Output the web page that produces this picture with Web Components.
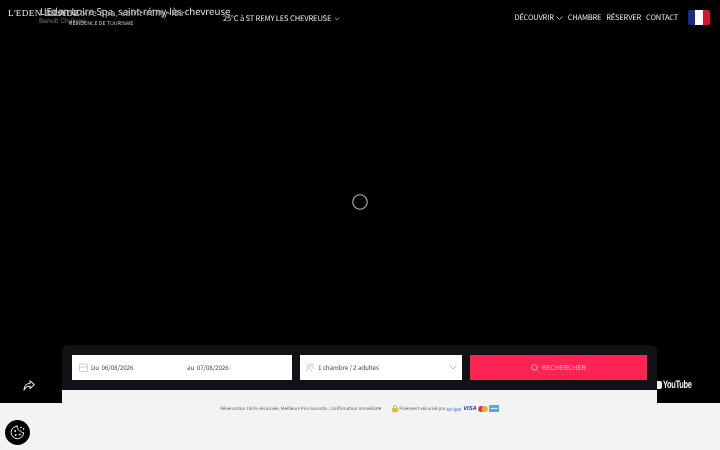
<!doctype html>
<html lang="fr">
<head>
<meta charset="utf-8">
<title>L'Eden Loire Spa</title>
<style>
  html, body { margin: 0; height: 450px; overflow: hidden; background: #f3f3f3; }
  body { font-family: "Noto Sans CJK JP", "Noto Sans", sans-serif; text-rendering: geometricPrecision; }
</style>
</head>
<body>
<eden-page>
  <eden-header slot="header"></eden-header>
  <eden-spinner slot="hero"></eden-spinner>
  <eden-share slot="left"></eden-share>
  <eden-booking slot="booking"></eden-booking>
  <eden-youtube slot="right"></eden-youtube>
</eden-page>
<eden-cookie></eden-cookie>

<script>
// Page frame: black hero on top, booking row straddling the hero's lower edge
class EdenPage extends HTMLElement {
  constructor() {
    super();
    this.attachShadow({ mode: 'open' }).innerHTML = `
      <style>
        :host { display: block; width: 720px; }
        .hero { background: #000; height: 345px; display: flex; flex-direction: column; }
        .mid { flex: 1; display: flex; align-items: center; justify-content: center; padding-top: 22px; }
        .row { display: grid; grid-template-columns: 62px 595px 63px; align-items: start; }
        .side { background: #000; height: 58px; }
      </style>
      <div class="hero">
        <slot name="header"></slot>
        <div class="mid"><slot name="hero"></slot></div>
      </div>
      <div class="row">
        <div class="side"><slot name="left"></slot></div>
        <slot name="booking"></slot>
        <div class="side"><slot name="right"></slot></div>
      </div>
    `;
  }
}

// Top bar. The logo texts overlap in the reference, so they sit on a free layer.
class EdenHeader extends HTMLElement {
  constructor() {
    super();
    this.attachShadow({ mode: 'open' }).innerHTML = `
      <style>
        :host { display: flex; align-items: flex-start; height: 36px; color: #e6e6e6; }
        .logo { position: relative; width: 223px; height: 36px; flex: none; filter: blur(.3px); }
        .logo span { position: absolute; white-space: nowrap; }
        .brand { left: 8px; top: 6px; font: 9.2px/14px "Liberation Serif", serif; letter-spacing: .3px; color: #e8e8e8; }
        .title { left: 40px; top: 5px; font: 9.6px/14px "Noto Sans", sans-serif; color: #e0e0e0; }
        .title2 { left: 44px; top: 6px; font: 8.6px/14px "Noto Sans", sans-serif; color: #aaa; letter-spacing: .4px; }
        .author { left: 39px; top: 15px; font: 6.5px/12px Inter, sans-serif; color: #777; }
        .tag { left: 69px; top: 18px; font: 5.1px/12px "Noto Sans CJK JP", sans-serif; letter-spacing: .15px; color: #ccc; }
        .weather { margin-top: 12px; font-size: 7.6px; letter-spacing: -.18px; line-height: 14px; display: flex; align-items: center; gap: 3px; white-space: nowrap; filter: blur(.25px); }
        nav { margin-left: auto; margin-top: 11px; display: flex; align-items: center; gap: 5px; font-size: 7.5px; letter-spacing: -.2px; line-height: 14px; white-space: nowrap; filter: blur(.25px); }
        nav span { display: inline-flex; align-items: center; gap: 2px; }
        svg.chev { width: 7px; height: 4px; fill: none; stroke: #ddd; stroke-width: .8; }
        .weather svg.chev { width: 6px; }
        .flag { margin: 10px 10px 0 10px; width: 22px; height: 15px; border-radius: 2px; filter: blur(.3px);
          background: linear-gradient(90deg, #1a2a8c 0 33%, #fff 33% 66%, #d8142c 66%); flex: none; }
      </style>
      <div class="logo">
        <span class="brand">L'EDEN ILLADE</span>
        <span class="title">L'Eden Loire Spa, saint-rémy-lès-chevreuse</span>
        <span class="title2">L'Eden Loire Spa, saint-rémy-lès</span>
        <span class="author">Benoit Chaigne</span>
        <span class="tag">RÉSIDENCE DE TOURISME</span>
      </div>
      <div class="weather">25°C à ST REMY LES CHEVREUSE
        <svg class="chev" viewBox="0 0 7 4"><path d="M1 .5 3.5 3 6 .5"/></svg></div>
      <nav>
        <span>DÉCOUVRIR <svg class="chev" viewBox="0 0 7 4"><path d="M.5.5 3.5 3.5 6.5.5"/></svg></span>
        <span>CHAMBRE</span><span>RÉSERVER</span><span>CONTACT</span>
      </nav>
      <div class="flag"></div>
    `;
  }
}

class EdenSpinner extends HTMLElement {
  constructor() {
    super();
    this.attachShadow({ mode: 'open' }).innerHTML = `
      <style>:host { display: block; width: 16px; height: 16px; } svg { display: block; }</style>
      <svg width="16" height="16" viewBox="0 0 16 16"><circle cx="8" cy="8" r="7.2" fill="none" stroke="#b5b5b5" stroke-width="1.1"/></svg>
    `;
  }
}

class EdenShare extends HTMLElement {
  constructor() {
    super();
    this.attachShadow({ mode: 'open' }).innerHTML = `
      <style>:host { display: flex; justify-content: flex-end; padding: 35px 27px 0 0; } svg { display: block; }</style>
      <svg width="12" height="11" viewBox="0 0 12 11" fill="none" stroke="#e8e8e8" stroke-width="1.1" stroke-linejoin="round">
        <path d="M7 .8 11.3 4.7 7 8.6V6.3C4.4 6.2 2.6 7.4 1 10 1.2 6.3 3.4 3.6 7 3.2Z"/>
      </svg>
    `;
  }
}

class EdenYoutube extends HTMLElement {
  constructor() {
    super();
    this.attachShadow({ mode: 'open' }).innerHTML = `
      <style>
        :host { display: flex; align-items: center; padding-top: 34px; color: #eee; gap: 1px; }
        i { display: block; width: 5px; height: 8px; background: #eee; border-radius: 0 2px 2px 0; }
        span { font: bold 11px/12px "Liberation Sans", sans-serif; letter-spacing: -.5px; transform: scaleX(.68); transform-origin: left; white-space: nowrap; }
      </style>
      <i></i><span>YouTube</span>
    `;
  }
}

// One white field of the search bar
class EdenField extends HTMLElement {
  constructor() {
    super();
    this.attachShadow({ mode: 'open' }).innerHTML = `
      <style>
        :host { display: flex; align-items: center; background: #fff; height: 25px; padding: 0 5px 0 7px; box-sizing: border-box; color: #474a50; font-size: 6.3px; letter-spacing: -.11px; white-space: nowrap; }
      </style>
      <slot></slot>
    `;
  }
}

class EdenBooking extends HTMLElement {
  constructor() {
    super();
    this.attachShadow({ mode: 'open' }).innerHTML = `
      <style>
        :host { display: block; }
        .back { background: #000; }
        .bar { background: #111116; border-radius: 6px 6px 0 0; height: 45px; box-sizing: border-box; padding: 10px;
          display: grid; grid-template-columns: 220px 162px 1fr; gap: 8px; }
        .date { flex: 0 0 108px; display: flex; align-items: center; gap: 3px; filter: blur(.2px); }
        .guest { flex: 1; display: flex; align-items: center; gap: 3px; margin-left: -2px; filter: blur(.2px); }
        button { border: 0; padding: 0; background: #ff2353; color: #f7b4c4; font: 7px/25px "Noto Sans CJK JP", sans-serif; letter-spacing: -.1px; height: 25px;
          display: flex; align-items: center; justify-content: center; gap: 3px; text-rendering: geometricPrecision; }
        button span { display: block; padding-top: 1px; line-height: 12px; }
        .trust { display: flex; align-items: center; justify-content: center; gap: 11px; height: 36px; box-sizing: border-box; padding-top: 1px; font-size: 4.5px; color: #5c5f64; white-space: nowrap; filter: blur(.2px); }
        .pay { display: flex; align-items: center; gap: 1px; }
        .stripe { color: #6a86e8; font: 600 5.2px/8px "Noto Sans", sans-serif; }
        .visa { color: #26408f; font: italic bold 5.8px/8px "Liberation Sans", sans-serif; margin-left: 1px; }
        svg { display: block; flex: none; }
      </style>
      <div class="back"><div class="bar">
        <eden-field>
          <span class="date">
            <svg width="9" height="9" viewBox="0 0 9 9" fill="none" stroke="#b8b8b8" stroke-width=".7"><rect x=".5" y="1" width="8" height="7.5" rx="1"/><path d="M.5 4h8"/></svg>
            Du&nbsp; 06/08/2026
          </span>
          <span class="date">au&nbsp; 07/08/2026</span>
        </eden-field>
        <eden-field>
          <span class="guest">
            <svg width="10" height="9" viewBox="0 0 9 9" fill="none" stroke="#bbb" stroke-width=".7"><circle cx="3.4" cy="3" r="1.5"/><path d="M.7 8.5C1 6 2 5.2 3.4 5.2S5.8 6 6 8.5"/><circle cx="6.6" cy="2" r="1.2"/><path d="M6.6 4.2c1.2 0 1.8.8 2 2.4"/></svg>
            1 chambre / 2 adultes
          </span>
          <svg width="8" height="5" viewBox="0 0 8 5" fill="none" stroke="#aaa" stroke-width=".8"><path d="M.5.5 4 4 7.5.5"/></svg>
        </eden-field>
        <button>
          <svg width="8" height="8" viewBox="0 0 8 8" fill="none" stroke="#f7b4c4" stroke-width=".9"><circle cx="3.4" cy="3.4" r="2.7"/><path d="M5.4 5.4 7.6 7.6"/></svg>
          <span>RECHERCHER</span>
        </button>
      </div></div>
      <div class="trust">
        <span>Réservation 100% sécurisée, Meilleurs Prix Garantis, Confirmation Immédiate</span>
        <span class="pay">
          <svg width="6" height="7" viewBox="0 0 6 7"><path d="M1.4 3V2a1.6 1.6 0 0 1 3.2 0v1" fill="none" stroke="#b89a3a" stroke-width=".7"/><rect y="3" width="6" height="4" rx=".5" fill="#e0b93e"/></svg>
          Paiement sécurisé par <span class="stripe">stripe</span>
          <span class="visa">VISA</span>
          <svg width="10" height="6" viewBox="0 0 10 6"><circle cx="3.2" cy="3" r="3" fill="#e0343a"/><circle cx="6.8" cy="3" r="3" fill="#f2a93a"/></svg>
          <svg width="10" height="7" viewBox="0 0 10 7"><rect width="10" height="7" rx=".6" fill="#5aa4dc"/><path d="M1.5 3.5h7" stroke="#d8ecf8" stroke-width="1.2"/></svg>
        </span>
      </div>
    `;
  }
}

// Round cookie button, floats over the page corner
class EdenCookie extends HTMLElement {
  constructor() {
    super();
    this.attachShadow({ mode: 'open' }).innerHTML = `
      <style>
        :host { position: fixed; left: 5px; top: 420px; width: 25px; height: 25px; border-radius: 50%; background: #000;
          display: flex; align-items: center; justify-content: center; }
        svg { display: block; }
      </style>
      <svg width="15" height="15" viewBox="0 0 15 15" fill="none" stroke="#f2f2f2" stroke-width="1" stroke-linecap="round">
        <path d="M7.2 1.2C3.8 1.3 1.2 4 1.2 7.4a6.2 6.2 0 0 0 12.4.2c-1.5.2-2.6-.5-3-1.8-1.4.2-2.9-.9-2.8-2.3-.6-.6-.7-1.4-.6-2.3Z"/>
        <circle cx="5" cy="6" r=".5"/><circle cx="5.5" cy="10" r=".5"/><circle cx="9.5" cy="9.5" r=".5"/><circle cx="11" cy="2.5" r=".4"/><circle cx="13.4" cy="4" r=".3"/>
      </svg>
    `;
  }
}

customElements.define('eden-page', EdenPage);
customElements.define('eden-header', EdenHeader);
customElements.define('eden-spinner', EdenSpinner);
customElements.define('eden-share', EdenShare);
customElements.define('eden-youtube', EdenYoutube);
customElements.define('eden-field', EdenField);
customElements.define('eden-booking', EdenBooking);
customElements.define('eden-cookie', EdenCookie);
</script>
</body>
</html>
